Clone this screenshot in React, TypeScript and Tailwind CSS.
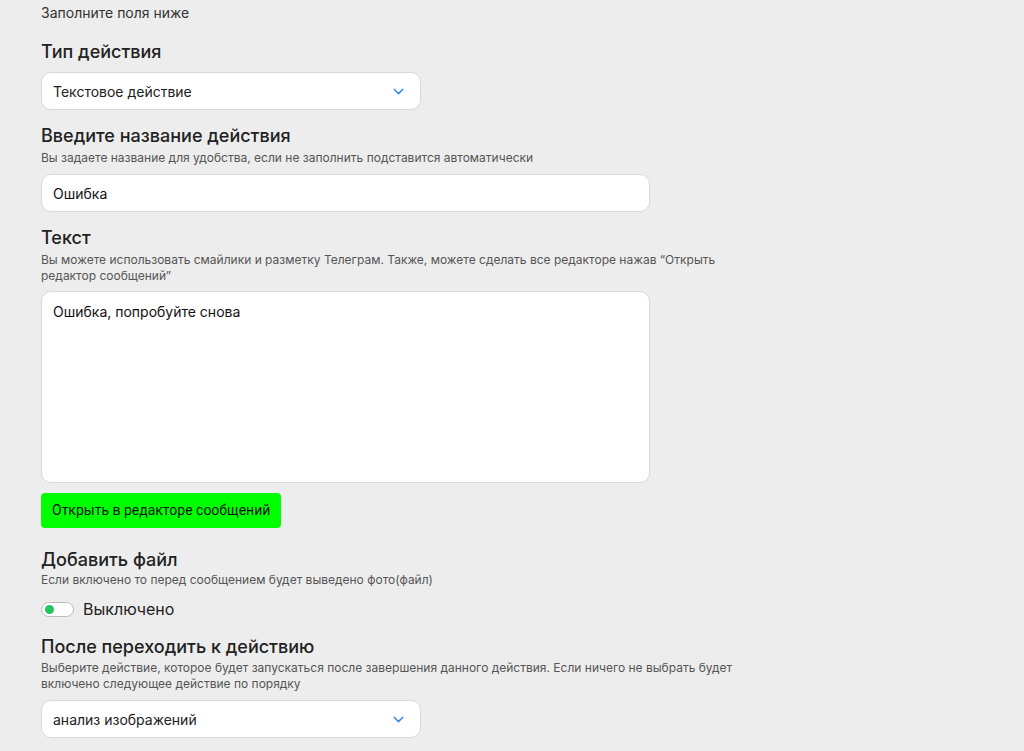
import { ChevronDown } from "lucide-react"

const font = { fontFamily: "Inter, 'Noto Sans', sans-serif" }

function Select({ value }: { value: string }) {
  return (
    <div className="flex h-[38px] w-[380px] items-center justify-between rounded-[10px] border border-[#d9d9d9] bg-white pl-[11px] pr-[13px] text-[14px] text-[#222]">
      <span>{value}</span>
      <ChevronDown size={17} strokeWidth={2} className="text-[#3b8cf0]" />
    </div>
  )
}

function Title({ children }: { children: React.ReactNode }) {
  return <h2 className="text-[18px] font-medium leading-[24px] text-[#222]">{children}</h2>
}

function Hint({ children, className = "mt-[2px]" }: { children: React.ReactNode; className?: string }) {
  return <p className={`${className} max-w-[712px] text-[12px] leading-[16px] text-[#555]`}>{children}</p>
}

export default function App() {
  return (
    <div className="min-h-[751px] bg-[#ededed] pl-[41px] pt-[3px] pb-[20px]" style={font}>
      <p className="text-[14px] leading-[20px] text-[#333]">Заполните поля ниже</p>

      <div className="mt-[17px] flex flex-col gap-[14px]">
        <section className="flex flex-col">
          <Title>Тип действия</Title>
          <div className="mt-[8px]">
            <Select value="Текстовое действие" />
          </div>
        </section>

        <section className="flex flex-col">
          <Title>Введите название действия</Title>
          <Hint>Вы задаете название для удобства, если не заполнить подставится автоматически</Hint>
          <div className="mt-[8px] flex h-[38px] w-[609px] items-center rounded-[10px] border border-[#d9d9d9] bg-white px-[11px] text-[14px] text-[#111]">
            Ошибка
          </div>
        </section>

        <section className="flex flex-col items-start">
          <Title>Текст</Title>
          <Hint>
            Вы можете использовать смайлики и разметку Телеграм. Также, можете сделать все редакторе нажав “Открыть
            редактор сообщений”
          </Hint>
          <div className="mt-[7px] h-[192px] w-[609px] rounded-[10px] border border-[#d9d9d9] bg-white px-[11px] py-[9px] text-[14px] text-[#111]">
            Ошибка, попробуйте снова
          </div>
          <button
            className="mt-[10px] h-[35px] rounded-[4px] bg-[#00ff00] px-[11px] text-[14px] text-[#111]"
            style={{ fontFamily: "Roboto, 'Noto Sans', sans-serif" }}
          >
            Открыть в редакторе сообщений
          </button>
        </section>

        <section className="mt-[6px] flex flex-col">
          <Title>Добавить файл</Title>
          <Hint className="mt-0">Если включено то перед сообщением будет выведено фото(файл)</Hint>
          <div className="mt-[10px] flex h-[22px] items-center gap-[9px]">
            <span className="flex h-[15px] w-[33px] items-center rounded-full border border-[#bbb] bg-white pl-[3px]">
              <span className="h-[9px] w-[9px] rounded-full bg-[#22c55e]" />
            </span>
            <span className="text-[16px] text-[#222]">Выключено</span>
          </div>
        </section>

        <section className="mt-[1px] flex flex-col">
          <Title>После переходить к действию</Title>
          <Hint className="mt-[1px]">
            Выберите действие, которое будет запускаться после завершения данного действия. Если ничего не выбрать будет
            включено следующее действие по порядку
          </Hint>
          <div className="mt-[8px]">
            <Select value="анализ изображений" />
          </div>
        </section>
      </div>
    </div>
  )
}
